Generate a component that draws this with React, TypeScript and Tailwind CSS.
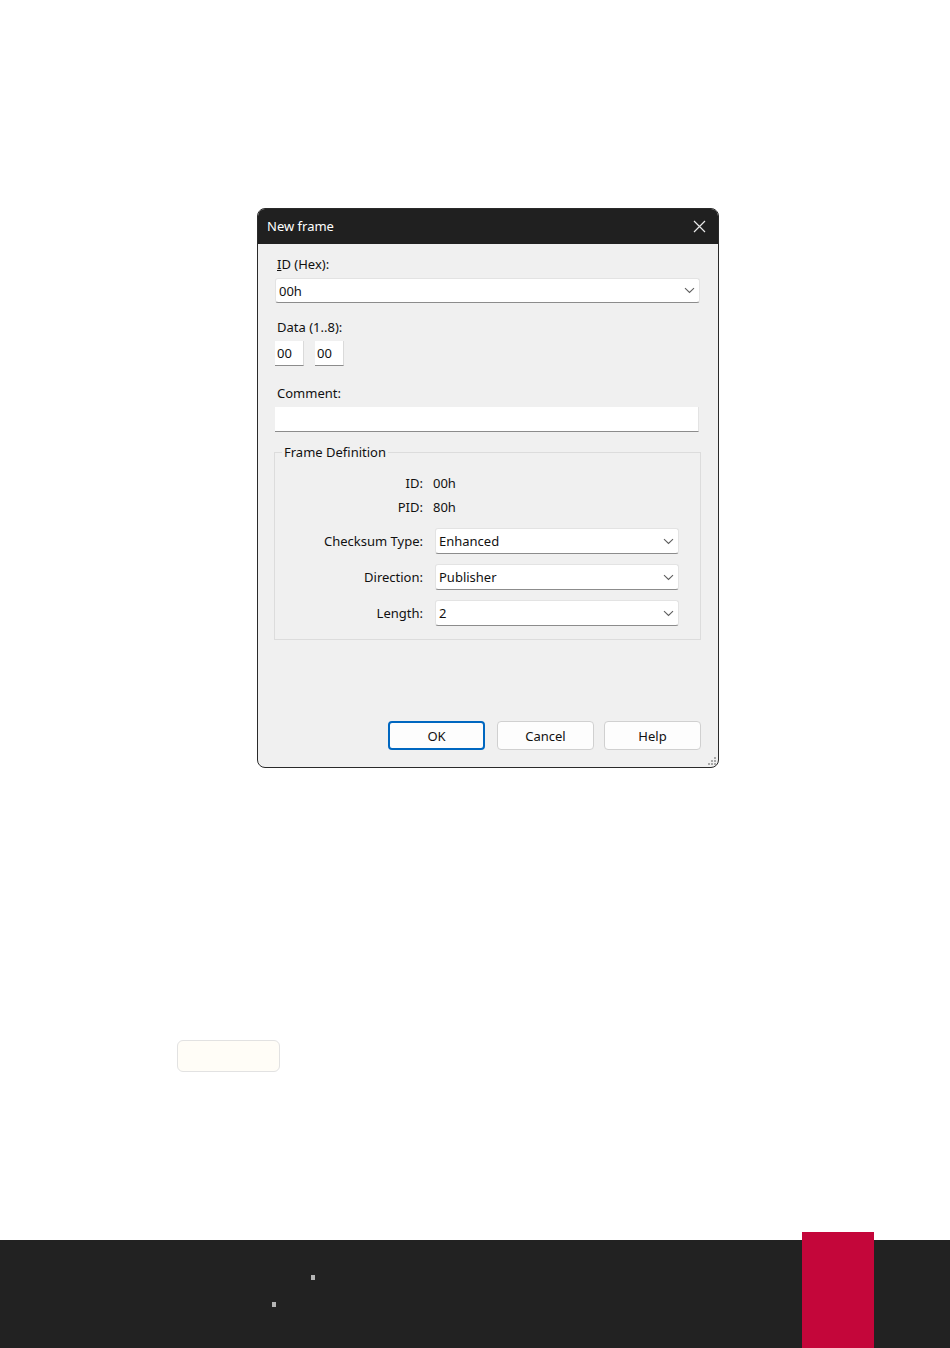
import React from "react";

const font = { fontFamily: '"Noto Sans", "Open Sans", Arial, sans-serif' };

function Chevron() {
  return (
    <svg width="11" height="7" viewBox="0 0 11 7" className="shrink-0">
      <path d="M1 1.2 L5.5 5.5 L10 1.2" fill="none" stroke="#5f5f5f" strokeWidth="1.1" />
    </svg>
  );
}

function Combo({ value, className }: { value: string; className: string }) {
  return (
    <div
      className={`flex items-center justify-between bg-white border border-[#e3e3e3] border-b-[#8c8c8c] rounded-[3px] pl-[3px] pr-[4px] text-[13px] text-[#111111] ${className}`}
    >
      <span>{value}</span>
      <Chevron />
    </div>
  );
}

function Grip() {
  const dots = [
    [8, 0],
    [8, 3],
    [5, 3],
    [8, 6],
    [5, 6],
    [2, 6],
  ];
  return (
    <svg width="11" height="9" viewBox="0 0 11 9" className="absolute right-[1px] bottom-[1px]">
      {dots.map(([x, y], i) => (
        <rect key={i} x={x} y={y} width="2" height="2" fill="#a8a8a8" />
      ))}
    </svg>
  );
}

function Dialog() {
  return (
    <div
      className="relative w-[462px] h-[560px] rounded-[8px] border border-[#2a2a2a] bg-[#f0f0f0] overflow-hidden flex flex-col"
      style={font}
    >
      <div className="h-[35px] bg-[#202020] flex items-center justify-between pl-[9px] pr-[12px] shrink-0">
        <span className="text-white text-[13px]">New frame</span>
        <svg width="13" height="13" viewBox="0 0 13 13">
          <path d="M1 1 L12 12 M12 1 L1 12" stroke="#e8e8e8" strokeWidth="1.2" />
        </svg>
      </div>
      <div className="flex flex-col text-[13px] leading-[16px] text-[#111111]">
        <div className="pl-[19px] mt-[12px]">
          <span className="underline">I</span>D (Hex):
        </div>
        <div className="pl-[17px] pr-[18px] mt-[6px]">
          <Combo value="00h" className="h-[25px] w-full" />
        </div>
        <div className="pl-[19px] mt-[16px]">Data (1..8):</div>
        <div className="pl-[17px] mt-[6px] flex gap-[11px]">
          <div className="w-[29px] h-[25px] bg-white border-b border-b-[#8c8c8c] border-r border-r-[#dadada] pl-[2px] leading-[24px]">
            00
          </div>
          <div className="w-[29px] h-[25px] bg-white border-b border-b-[#8c8c8c] border-r border-r-[#dadada] pl-[2px] leading-[24px]">
            00
          </div>
        </div>
        <div className="pl-[19px] mt-[19px]">Comment:</div>
        <div className="pl-[17px] pr-[19px] mt-[6px]">
          <div className="h-[25px] w-full bg-white border-b border-b-[#8c8c8c] border-r border-r-[#e3e3e3]" />
        </div>
        <fieldset className="ml-[16px] mr-[17px] mt-[12px] border border-[#dcdcdc] pb-[13px]">
          <legend className="ml-[7px] px-[2px] leading-[16px]">Frame Definition</legend>
          <div className="grid grid-cols-[148px_1fr] items-center">
            <div className="text-right mt-[15px]">ID:</div>
            <div className="pl-[10px] mt-[15px]">00h</div>
            <div className="text-right mt-[8px]">PID:</div>
            <div className="pl-[10px] mt-[8px]">80h</div>
            <div className="text-right mt-[13px]">Checksum Type:</div>
            <div className="pl-[12px] mt-[13px]">
              <Combo value="Enhanced" className="h-[26px] w-[244px]" />
            </div>
            <div className="text-right mt-[10px]">Direction:</div>
            <div className="pl-[12px] mt-[10px]">
              <Combo value="Publisher" className="h-[26px] w-[244px]" />
            </div>
            <div className="text-right mt-[10px]">Length:</div>
            <div className="pl-[12px] mt-[10px]">
              <Combo value="2" className="h-[26px] w-[244px]" />
            </div>
          </div>
        </fieldset>
        <div className="flex justify-end pr-[17px] mt-[81px]">
          <div className="w-[97px] h-[29px] rounded-[4px] border-2 border-[#0067c0] bg-[#fdfdfd] flex items-center justify-center">
            OK
          </div>
          <div className="ml-[12px] w-[97px] h-[29px] rounded-[4px] border border-[#d0d0d0] bg-[#fdfdfd] flex items-center justify-center">
            Cancel
          </div>
          <div className="ml-[10px] w-[97px] h-[29px] rounded-[4px] border border-[#d0d0d0] bg-[#fdfdfd] flex items-center justify-center">
            Help
          </div>
        </div>
      </div>
      <Grip />
    </div>
  );
}

export default function App() {
  return (
    <div className="w-[950px] h-[1348px] bg-white flex flex-col overflow-hidden">
      <div className="pt-[208px] pl-[257px]">
        <Dialog />
      </div>
      <div className="pl-[177px] pt-[272px]">
        <div className="w-[103px] h-[32px] rounded-[6px] border border-[#e2e2e2] bg-[#fffdf7]" />
      </div>
      <div className="relative mt-[168px] h-[108px] bg-[#222222]">
        <div className="absolute left-[311px] top-[35px] w-[4px] h-[5px] bg-[#b5b5b5]" />
        <div className="absolute left-[272px] top-[62px] w-[4px] h-[5px] bg-[#b5b5b5]" />
        <div className="absolute left-[802px] top-[-8px] w-[72px] h-[116px] bg-[#c4063a]" />
      </div>
    </div>
  );
}
